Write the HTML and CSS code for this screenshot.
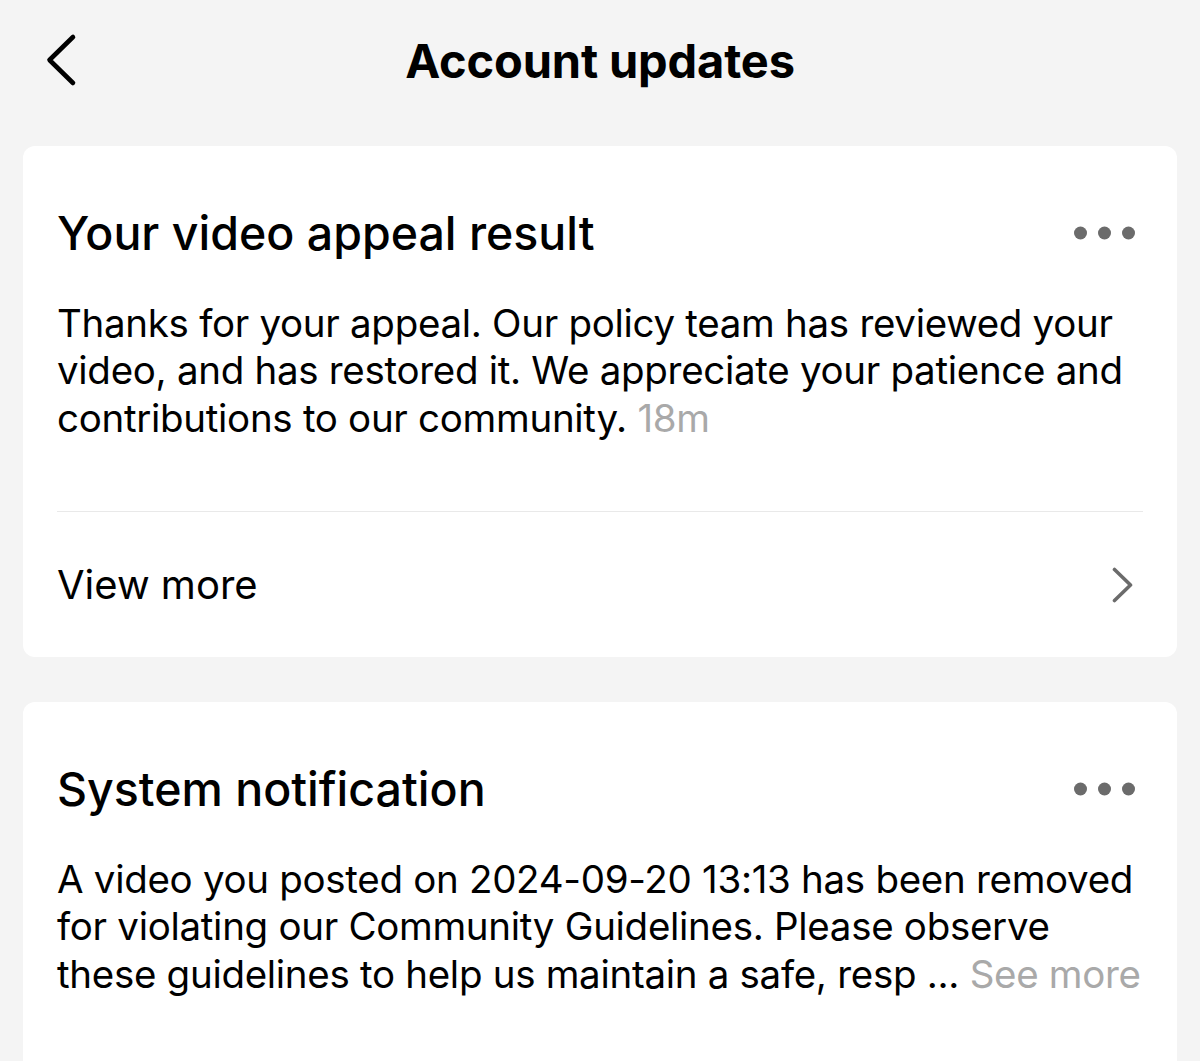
FILE: index.html
```html
<!DOCTYPE html>
<html lang="en">
<head>
<meta charset="utf-8">
<title>Account updates</title>
<link rel="stylesheet" href="styles.css">
</head>
<body>
<header class="topbar">
  <button class="back" aria-label="Back">
    <svg width="36" height="56" viewBox="0 0 36 56"><path d="M30 5 L6.5 28 L30 51" fill="none" stroke="#000" stroke-width="4.6" stroke-linecap="round" stroke-linejoin="round"/></svg>
  </button>
  <h1 class="page-title">Account updates</h1>
  <span class="spacer"></span>
</header>

<main class="list">
  <section class="card">
    <div class="card-head">
      <h2 class="card-title">Your video appeal result</h2>
      <svg class="dots" width="61" height="14" viewBox="0 0 61 14"><circle cx="6.5" cy="7" r="6.5" fill="#6b6b6b"/><circle cx="30.5" cy="7" r="6.5" fill="#6b6b6b"/><circle cx="54.5" cy="7" r="6.5" fill="#6b6b6b"/></svg>
    </div>
    <p class="card-body">Thanks for your appeal. Our policy team has reviewed your<br>video, and has restored it. We appreciate your patience and<br>contributions to our community. <span class="muted">18m</span></p>
    <div class="card-link">
      <span>View more</span>
      <svg class="chev" width="24" height="36" viewBox="0 0 24 36"><path d="M4.5 2.5 L20.5 18 L4.5 33.5" fill="none" stroke="#6b6b6b" stroke-width="3.6" stroke-linecap="round" stroke-linejoin="round"/></svg>
    </div>
  </section>

  <section class="card card-open">
    <div class="card-head">
      <h2 class="card-title">System notification</h2>
      <svg class="dots" width="61" height="14" viewBox="0 0 61 14"><circle cx="6.5" cy="7" r="6.5" fill="#6b6b6b"/><circle cx="30.5" cy="7" r="6.5" fill="#6b6b6b"/><circle cx="54.5" cy="7" r="6.5" fill="#6b6b6b"/></svg>
    </div>
    <p class="card-body">A video you posted on 2024-09-20 13:13 has been removed<br>for violating our Community Guidelines. Please observe<br>these guidelines to help us maintain a safe, resp ... <span class="muted">See more</span></p>
  </section>
</main>
</body>
</html>
```

FILE: styles.css
```css
* { box-sizing: border-box; }

html, body {
  margin: 0;
  padding: 0;
  background: #f4f4f4;
  font-family: "Inter", "Liberation Sans", sans-serif;
  color: #000;
}

.topbar {
  height: 120px;
  display: grid;
  grid-template-columns: 1fr auto 1fr;
  align-items: center;
}

.back {
  justify-self: start;
  margin-left: 43px;
  padding: 0;
  border: 0;
  background: none;
  display: flex;
}

.page-title {
  margin: 0;
  font-size: 47px;
  line-height: 1;
  font-weight: 700;
  letter-spacing: -0.15px;
}

.list {
  padding: 26px 23px 0;
  display: flex;
  flex-direction: column;
  gap: 45px;
}

.card {
  background: #fff;
  border-radius: 12px;
  padding: 64px 34px 0;
}

.card-open {
  padding-bottom: 80px;
}

.card-head {
  display: flex;
  align-items: center;
  justify-content: space-between;
}

.card-title {
  margin: 0;
  font-size: 46.5px;
  line-height: 1;
  font-weight: 500;
  letter-spacing: 0;
}

.dots {
  margin-right: 8px;
  flex: none;
}

.card-body {
  margin: 43px 0 0;
  font-size: 38.5px;
  line-height: 47.5px;
  font-weight: 400;
  letter-spacing: -0.3px;
  padding-bottom: 69px;
  white-space: nowrap;
}

.muted {
  color: #a9a9a9;
}

.card-link {
  border-top: 1px solid #e9e9e9;
  height: 146px;
  display: flex;
  align-items: center;
  justify-content: space-between;
  font-size: 40px;
  letter-spacing: 0;
}

.chev {
  margin-right: 9px;
  flex: none;
}
```
